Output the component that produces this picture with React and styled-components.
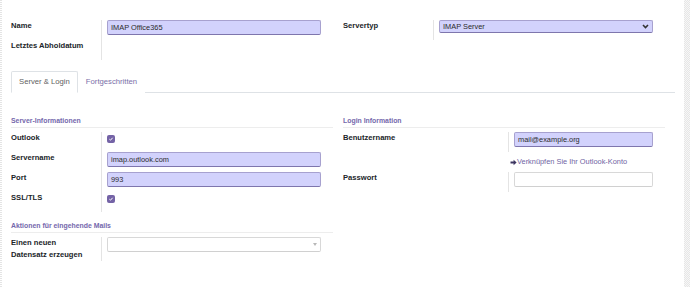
import React from 'react';
import styled, { createGlobalStyle } from 'styled-components';

const GlobalStyle = createGlobalStyle`
    html, body {
        margin: 0;
        padding: 0;
        background: #ffffff;
    }
    body {
        font-family: "Liberation Sans", Arial, sans-serif;
        font-size: 7.6px;
        color: #212529;
    }
`;

const Frame = styled.div`
    display: flex;
    height: 287px;
    .frame__edge {
        width: 2px;
        background: repeating-linear-gradient(0deg, #e4e4e4 0 1px, #ffffff 1px 2px);
    }
    .frame__scroll {
        width: 6px;
        background: repeating-conic-gradient(#e6e6e6 0 25%, #f7f7f7 0 50%) 0 0 / 2px 2px;
    }
`;

const Sheet = styled.div`
    flex: 1;
    padding: 20px 9px 0 9px;
`;

const Columns = styled.div`
    display: grid;
    grid-template-columns: 332px 332px;
`;

const Column = styled.div`
    padding-right: 10px;
`;

const FieldTable = styled.div`
    display: grid;
    grid-template-columns: ${(p) => p.labelWidth || 90}px 1fr;
    grid-auto-rows: minmax(20px, auto);
`;

const Label = styled.div`
    font-weight: bold;
    line-height: 12px;
    color: #212529;
`;

const Value = styled.div`
    border-left: 1px solid #e4e4e4;
    padding: 0 12px 0 5px;
`;

const Wide = styled.div`
    grid-column: 1 / 3;
    padding-left: ${(p) => p.indent || 0}px;
    height: 20px;
    display: flex;
    align-items: center;
`;

const TextInput = styled.div`
    box-sizing: border-box;
    height: 15px;
    padding: 0 3px;
    line-height: 14px;
    font-size: 7.4px;
    border-radius: 2px;
    border: 1px solid ${(p) => (p.required ? '#a7a1cf' : '#d8d8d8')};
    border-bottom-color: ${(p) => (p.required ? '#7e76ad' : '#d0d0d0')};
    background: ${(p) => (p.required ? '#d2d2fc' : '#ffffff')};
    color: #2b2b2b;
`;

const SelectBox = styled(TextInput)`
    display: flex;
    align-items: center;
    justify-content: space-between;
    height: ${(p) => p.h || 15}px;
    .select__caret {
        color: ${(p) => (p.required ? '#333' : '#b8b8b8')};
    }
`;

const Check = styled.div`
    margin-top: 3px;
    width: 8px;
    height: 8px;
    border-radius: 2px;
    background: #7463a6;
    display: flex;
    align-items: center;
    justify-content: center;
`;

const TabBar = styled.div`
    display: flex;
    margin-top: 11px;
    border-bottom: 1px solid #dee2e6;
    width: 664px;
`;

const Tab = styled.div`
    padding: 0 7px;
    height: 20px;
    line-height: 20px;
    font-size: 7.7px;
    margin-bottom: -1px;
    border: 1px solid ${(p) => (p.active ? '#dee2e6' : 'transparent')};
    border-bottom-color: ${(p) => (p.active ? '#ffffff' : 'transparent')};
    border-radius: 2px 2px 0 0;
    background: #fff;
    color: ${(p) => (p.active ? '#5f5f5f' : '#7a6fa8')};
`;

const TabBody = styled.div`
    padding-top: 22px;
`;

const Heading = styled.div`
    font-size: 6.9px;
    font-weight: bold;
    line-height: 12px;
    color: #7467ac;
    border-bottom: 1px solid #ededed;
    margin-bottom: 4px;
    margin-top: ${(p) => p.gap || 0}px;
`;

const Link = styled.span`
    display: inline-flex;
    align-items: center;
    color: #6f64a3;
    font-size: 7.4px;
    line-height: 10px;
`;

function Caret({ big }) {
    return big ? (
        <svg className="select__caret" width="7" height="5" viewBox="0 0 7 5">
            <path d="M1 1 L3.5 3.5 L6 1" stroke="currentColor" strokeWidth="1.6" fill="none" />
        </svg>
    ) : (
        <svg className="select__caret" width="4" height="3" viewBox="0 0 4 3">
            <path d="M0 0 H4 L2 3 Z" fill="currentColor" />
        </svg>
    );
}

function Checkbox() {
    return (
        <Check>
            <svg width="6" height="6" viewBox="0 0 6 6">
                <path d="M1.4 3.2 L2.5 4.2 L4.6 1.8" stroke="#fff" strokeWidth="1" fill="none" />
            </svg>
        </Check>
    );
}

function App() {
    return (
        <>
            <GlobalStyle />
            <Frame>
                <div className="frame__edge" />
                <Sheet>
                    <Columns>
                        <Column>
                            <FieldTable>
                                <Label>Name</Label>
                                <Value>
                                    <TextInput required>IMAP Office365</TextInput>
                                </Value>
                                <Label>Letztes Abholdatum</Label>
                                <Value />
                            </FieldTable>
                        </Column>
                        <Column>
                            <FieldTable>
                                <Label>Servertyp</Label>
                                <Value>
                                    <SelectBox required h={13}>
                                        IMAP Server
                                        <Caret big />
                                    </SelectBox>
                                </Value>
                            </FieldTable>
                        </Column>
                    </Columns>

                    <TabBar>
                        <Tab active>Server &amp; Login</Tab>
                        <Tab>Fortgeschritten</Tab>
                    </TabBar>

                    <TabBody>
                        <Columns>
                            <Column>
                                <Heading>Server-Informationen</Heading>
                                <FieldTable>
                                    <Label>Outlook</Label>
                                    <Value>
                                        <Checkbox />
                                    </Value>
                                    <Label>Servername</Label>
                                    <Value>
                                        <TextInput required>imap.outlook.com</TextInput>
                                    </Value>
                                    <Label>Port</Label>
                                    <Value>
                                        <TextInput required>993</TextInput>
                                    </Value>
                                    <Label>SSL/TLS</Label>
                                    <Value>
                                        <Checkbox />
                                    </Value>
                                </FieldTable>
                                <Heading gap={8}>Aktionen für eingehende Mails</Heading>
                                <FieldTable>
                                    <Label>
                                        Einen neuen
                                        <br />
                                        Datensatz erzeugen
                                    </Label>
                                    <Value>
                                        <SelectBox>
                                            <span />
                                            <Caret />
                                        </SelectBox>
                                    </Value>
                                </FieldTable>
                            </Column>
                            <Column>
                                <Heading>Login Information</Heading>
                                <FieldTable labelWidth={165}>
                                    <Label>Benutzername</Label>
                                    <Value>
                                        <TextInput required>mail@example.org</TextInput>
                                    </Value>
                                    <Wide indent={167}>
                                        <Link>
                                            <svg width="7" height="7" viewBox="0 0 7 7">
                                                <path d="M0.5 2.6 H3.6 V0.8 L6.6 3.5 L3.6 6.2 V4.4 H0.5 Z" fill="#3c3560" />
                                            </svg>
                                            Verknüpfen Sie Ihr Outlook-Konto
                                        </Link>
                                    </Wide>
                                    <Label>Passwort</Label>
                                    <Value>
                                        <TextInput />
                                    </Value>
                                </FieldTable>
                            </Column>
                        </Columns>
                    </TabBody>
                </Sheet>
                <div className="frame__scroll" />
            </Frame>
        </>
    );
}

export default App;
